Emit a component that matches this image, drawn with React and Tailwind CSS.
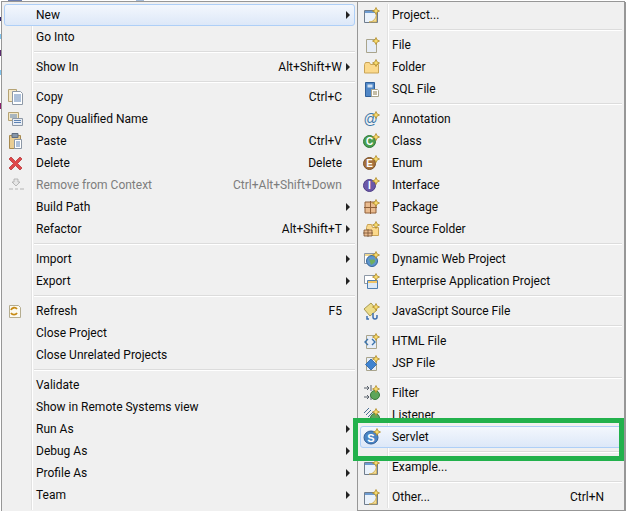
import React from "react";

// gold "new" sparkle that sits on the corner of most wizard icons
const Star = ({ x = 15, y = 6 }) => (
  <path
    d={`M${x} ${y - 3.5}l1.100 2.400 2.400 1.100-2.400 1.100-1.100 2.400-1.100-2.400-2.400-1.100 2.400-1.100z`}
    fill="#f8dc6c"
    stroke="#b08a28"
    strokeWidth="0.8"
  />
);

const Icon = ({ children }) => (
  <svg width="20" height="20" viewBox="0 0 20 20" className="shrink-0 overflow-visible">
    {children}
  </svg>
);

// the submenu's icons sit two pixels further left in their column
const NewIcon = ({ children }) => (
  <svg width="20" height="20" viewBox="2 0 20 20" className="shrink-0 overflow-visible">
    {children}
  </svg>
);

const Sheet = () => <path d="M5.500 4.500h10v13h-10z" fill="#e6edf7" stroke="#a9a48c" />;

const WindowIcon = () => (
  <NewIcon>
    <path d="M3.500 5.500h13v12h-13z" fill="#eaf2fb" stroke="#6f7c8c" />
    <path d="M4 6h12v2H4z" fill="#6d9bd0" />
    <path d="M15.500 9v8H8c4 0 7-3 7.500-8z" fill="#f3dc92" stroke="#c9a74c" strokeWidth="0.8" />
    <Star />
  </NewIcon>
);

const Copy = () => (
  <Icon>
    <path d="M1.500 2.500h8v12h-8z" fill="#f4e8c8" stroke="#b5a374" />
    <path d="M5.500 4.500h8l2 2v11h-10z" fill="#fff" stroke="#8d98a6" />
    <path d="M7 8h7M7 10h7M7 12h7M7 14h7" stroke="#5c82b4" />
  </Icon>
);

const CopyName = () => (
  <Icon>
    <path d="M1.500 3.500h10v8h-10z" fill="#f4e8c8" stroke="#b5a374" />
    <path d="M3 6h7M3 8h7" stroke="#5c82b4" />
    <path d="M5.500 9.500h10v7h-10z" fill="#e8edf4" stroke="#8d98a6" />
    <path d="M7 11.500h7M7 13.500h7" stroke="#5c82b4" />
  </Icon>
);

const Paste = () => (
  <Icon>
    <path d="M2.500 4.500h11v13h-11z" fill="#e9cd93" stroke="#a88a50" />
    <path d="M5 2.500h6v4H5z" fill="#8796a8" stroke="#5f6d80" />
    <path d="M7.500 8.500h7v9h-7z" fill="#fff" stroke="#8d98a6" />
    <path d="M9 11h4M9 13h4M9 15h4" stroke="#5c82b4" />
  </Icon>
);

const Delete = () => (
  <Icon>
    <path d="M4 4l4.500 4.500L13 4l2 2-4.500 4.500L15 15l-2 2-4.500-4.500L4 17l-2-2 4.500-4.500L2 6z" fill="#e0484a" stroke="#b63a3c" strokeWidth="0.8" />
  </Icon>
);

const Remove = () => (
  <Icon>
    <path d="M7 4h4v3h2l-4 4-4-4h2z" fill="#e6e6e6" stroke="#a9a9a9" strokeWidth="0.8" />
    <path d="M2 14h4M13 14h4M8 14h3" stroke="#b4b4b4" />
  </Icon>
);

const Refresh = () => (
  <Icon>
    <path d="M2.500 4.500h9l2 2v10h-11z" fill="#fbfaf2" stroke="#b5ad90" />
    <path d="M4 9a3.500 3.500 0 0 1 6-1M10 12a3.500 3.500 0 0 1-6 0" fill="none" stroke="#c78a14" strokeWidth="1.800" />
  </Icon>
);

const FileNew = () => (
  <NewIcon>
    <Sheet />
    <Star />
  </NewIcon>
);

const FolderNew = () => (
  <NewIcon>
    <path d="M3.500 7.500l1-2h4l1 2h8v8.500h-14z" fill="#fbd98c" stroke="#c9a456" />
    <Star />
  </NewIcon>
);

const SqlFile = () => (
  <NewIcon>
    <path d="M4.500 3.500h9v14h-9z" fill="#4f86c6" stroke="#2f5f99" />
    <path d="M6.500 5.500h5v3h-5z" fill="#cfe0f3" />
    <path d="M10.500 10.500h6l1 1v6h-7z" fill="#fff" stroke="#a9a48c" />
    <path d="M12 13h4M12 15h4" stroke="#8b7d4f" />
  </NewIcon>
);

const Annotation = () => (
  <NewIcon>
    <text x="2.500" y="15" fontSize="14" fontFamily="Liberation Sans" fill="#3b77a8">@</text>
    <Star />
  </NewIcon>
);

const Badge = ({ fill, stroke, letter }) => (
  <NewIcon>
    <circle cx="8.500" cy="10.500" r="6" fill={fill} stroke={stroke} />
    <text x="8.500" y="14" textAnchor="middle" fontSize="10" fontWeight="bold" fontFamily="Liberation Sans" fill="#fff">
      {letter}
    </text>
    <Star />
  </NewIcon>
);

const Pack = () => (
  <NewIcon>
    <path d="M4 5h11v11H4z" fill="#e9bb8f" stroke="#8f5f38" />
    <path d="M9.500 4v13M3 10.500h13" stroke="#8f5f38" />
    <Star />
  </NewIcon>
);

const SourceFolder = () => (
  <NewIcon>
    <path d="M5.500 8.500l1-3h4l1 3h6v8h-12z" fill="#fbd98c" stroke="#c9a456" />
    <path d="M3 11h8v6H3zM7 10v8M2 14h10" fill="#e9bb8f" stroke="#7a5334" strokeWidth="0.800" />
    <Star />
  </NewIcon>
);

const WebProject = () => (
  <NewIcon>
    <path d="M3.500 4.500h12v10h-12z" fill="#fff" stroke="#8d98a6" />
    <path d="M4 5h11v2H4z" fill="#f0d890" />
    <circle cx="11" cy="12" r="5.500" fill="#5e95cc" stroke="#35669c" />
    <path d="M8 10c3 2 5-1 6 1s-2 4-4 5z" fill="#6fae5f" />
    <Star />
  </NewIcon>
);

const EarProject = () => (
  <NewIcon>
    <path d="M3.500 4.500h11v8h-11z" fill="#fff" stroke="#8d98a6" />
    <path d="M6.500 9.500h10v8h-10z" fill="#dce9f6" stroke="#4f7eb0" />
    <path d="M7 10h9v2H7z" fill="#f0c468" />
    <Star />
  </NewIcon>
);

const JsFile = () => (
  <NewIcon>
    <path d="M3 8l7-6 6 7-7 6z" fill="#ecdc8a" stroke="#a89a50" />
    <path d="M6 15v3h2M12 12v4a2 2 0 0 0 4 0v-2" fill="none" stroke="#3d6fb0" strokeWidth="1.500" />
    <Star />
  </NewIcon>
);

const HtmlFile = () => (
  <NewIcon>
    <Sheet />
    <path d="M7 8l-3 3 3 3M11 8l3 3-3 3" fill="none" stroke="#3b72aa" strokeWidth="1.400" />
    <Star />
  </NewIcon>
);

const JspFile = () => (
  <NewIcon>
    <Sheet />
    <path d="M10 6l5.500 5.500L10 17l-5.500-5.500z" fill="#3f83d0" stroke="#2c5f9e" strokeWidth="0.800" />
    <Star />
  </NewIcon>
);

const FilterIcon = () => (
  <NewIcon>
    <path d="M3 5h5M6 3l2 2-2 2M10 2v6M3 14h5M6 12l2 2-2 2M10 11v6" fill="none" stroke="#58606a" />
    <circle cx="14" cy="12" r="4.500" fill="#5da55a" stroke="#3a7a3a" />
    <Star />
  </NewIcon>
);

const Listener = () => (
  <NewIcon>
    <path d="M3 8l5-5M5 10l5-5M7 12l5-5" stroke="#4a6d94" />
    <circle cx="14" cy="13" r="4.500" fill="#5da55a" stroke="#3a7a3a" />
    <Star x={15} y={7} />
  </NewIcon>
);

const Servlet = () => (
  <NewIcon>
    <ellipse cx="10" cy="10.500" rx="7" ry="6.500" fill="#4a85c4" stroke="#2f5f99" />
    <text x="10" y="14.500" textAnchor="middle" fontSize="11" fontWeight="bold" fontFamily="Liberation Sans" fill="#fff">
      S
    </text>
    <Star x={16} y={5} />
  </NewIcon>
);

const leftMenu = [
  { label: "New", arrow: true, active: true },
  { label: "Go Into" },
  { sep: true },
  { label: "Show In", shortcut: "Alt+Shift+W", arrow: true },
  { sep: true },
  { label: "Copy", shortcut: "Ctrl+C", icon: <Copy /> },
  { label: "Copy Qualified Name", icon: <CopyName /> },
  { label: "Paste", shortcut: "Ctrl+V", icon: <Paste /> },
  { label: "Delete", shortcut: "Delete", icon: <Delete /> },
  { label: "Remove from Context", shortcut: "Ctrl+Alt+Shift+Down", icon: <Remove />, disabled: true },
  { label: "Build Path", arrow: true },
  { label: "Refactor", shortcut: "Alt+Shift+T", arrow: true },
  { sep: true },
  { label: "Import", arrow: true },
  { label: "Export", arrow: true },
  { sep: true },
  { label: "Refresh", shortcut: "F5", icon: <Refresh /> },
  { label: "Close Project" },
  { label: "Close Unrelated Projects" },
  { sep: true },
  { label: "Validate" },
  { label: "Show in Remote Systems view" },
  { label: "Run As", arrow: true },
  { label: "Debug As", arrow: true },
  { label: "Profile As", arrow: true },
  { label: "Team", arrow: true },
];

const rightMenu = [
  { label: "Project...", icon: <WindowIcon /> },
  { sep: true },
  { label: "File", icon: <FileNew /> },
  { label: "Folder", icon: <FolderNew /> },
  { label: "SQL File", icon: <SqlFile /> },
  { sep: true },
  { label: "Annotation", icon: <Annotation /> },
  { label: "Class", icon: <Badge fill="#4a9e50" stroke="#2f7a38" letter="C" /> },
  { label: "Enum", icon: <Badge fill="#a5713c" stroke="#7c5228" letter="E" /> },
  { label: "Interface", icon: <Badge fill="#6b58a8" stroke="#4c3c86" letter="I" /> },
  { label: "Package", icon: <Pack /> },
  { label: "Source Folder", icon: <SourceFolder /> },
  { sep: true },
  { label: "Dynamic Web Project", icon: <WebProject /> },
  { label: "Enterprise Application Project", icon: <EarProject /> },
  { sep: true },
  { label: "JavaScript Source File", icon: <JsFile /> },
  { sep: true },
  { label: "HTML File", icon: <HtmlFile /> },
  { label: "JSP File", icon: <JspFile /> },
  { sep: true },
  { label: "Filter", icon: <FilterIcon /> },
  { label: "Listener", icon: <Listener /> },
  { label: "Servlet", icon: <Servlet />, active: true },
  { sep: true },
  { label: "Example...", icon: <WindowIcon /> },
  { sep: true },
  { label: "Other...", shortcut: "Ctrl+N", icon: <WindowIcon />, wide: true },
];

function Row({ item }) {
  if (item.sep) {
    return (
      <div className="flex h-2 flex-col justify-center pl-[30px]">
        <div className="h-px bg-[#dcdcdc]" />
        <div className="h-px bg-white" />
      </div>
    );
  }
  return (
    <div
      className={
        "flex h-[22px] items-center rounded-[3px] border " +
        (item.active
          ? "border-[#aecff7] bg-gradient-to-b from-[#f3f7fd] to-[#dde8f8] "
          : "border-transparent ") +
        (item.disabled ? "text-[#7d7d7d]" : "text-[#0a0a0a]")
      }
    >
      <div className="flex w-[31px] shrink-0 items-center pl-[2px]">{item.icon}</div>
      <span className="grow whitespace-nowrap">{item.label}</span>
      {item.shortcut && (
        <span className={"whitespace-nowrap " + (item.wide ? "pr-[5px]" : "")}>{item.shortcut}</span>
      )}
      <div className="flex w-[12px] shrink-0 justify-end pr-[4px]">
        {item.arrow && <div className="h-0 w-0 border-y-[4px] border-l-[4px] border-y-transparent border-l-[#222222]" />}
      </div>
    </div>
  );
}

function Menu({ items, className }) {
  return (
    <div className={"relative shrink-0 border border-[#979797] bg-[#f0f0f0] p-[2px] " + className}>
      {/* gutter line between the icons and the labels */}
      <div className="absolute bottom-[2px] left-[29px] top-[2px] w-px bg-[#e2e2e2]" />
      <div className="absolute bottom-[2px] left-[30px] top-[2px] w-px bg-white" />
      <div className="relative">
        {items.map((item, i) => (
          <Row key={i} item={item} />
        ))}
      </div>
    </div>
  );
}

export default function App() {
  return (
    <div className="relative flex h-[511px] w-[626px] overflow-hidden bg-white pl-px pt-px font-['Roboto',sans-serif] text-[12px]">
      {/* bits of the window behind the menu, peeking out along the edges */}
      <div className="absolute left-0 top-[17px] h-[4px] w-px bg-[#2b2170]" />
      <div className="absolute left-0 top-[34px] h-[5px] w-px bg-[#7fc4ee]" />
      <div className="absolute left-0 top-[50px] h-[6px] w-px bg-[#5b2a6e]" />
      <div className="absolute left-0 top-[70px] h-[5px] w-px bg-[#7fc4ee]" />
      <div className="absolute left-0 top-[103px] h-[6px] w-px bg-[#8a1f6a]" />
      <div className="absolute left-[8px] top-0 h-px w-[14px] bg-[#6d7fb0]" />
      <div className="absolute left-[136px] top-0 h-px w-[8px] bg-[#a7bcd8]" />

      <Menu items={leftMenu} className="h-[512px] w-[356px] border-r-0" />
      <Menu items={rightMenu} className="h-[510px] w-[268px] shadow-[1px_1px_0_#979797]" />
      {/* green annotation box drawn over the screenshot */}
      <div className="absolute left-[353px] top-[418px] h-[43px] w-[271px] border-[5px] border-[#22b14c]" />
    </div>
  );
}
